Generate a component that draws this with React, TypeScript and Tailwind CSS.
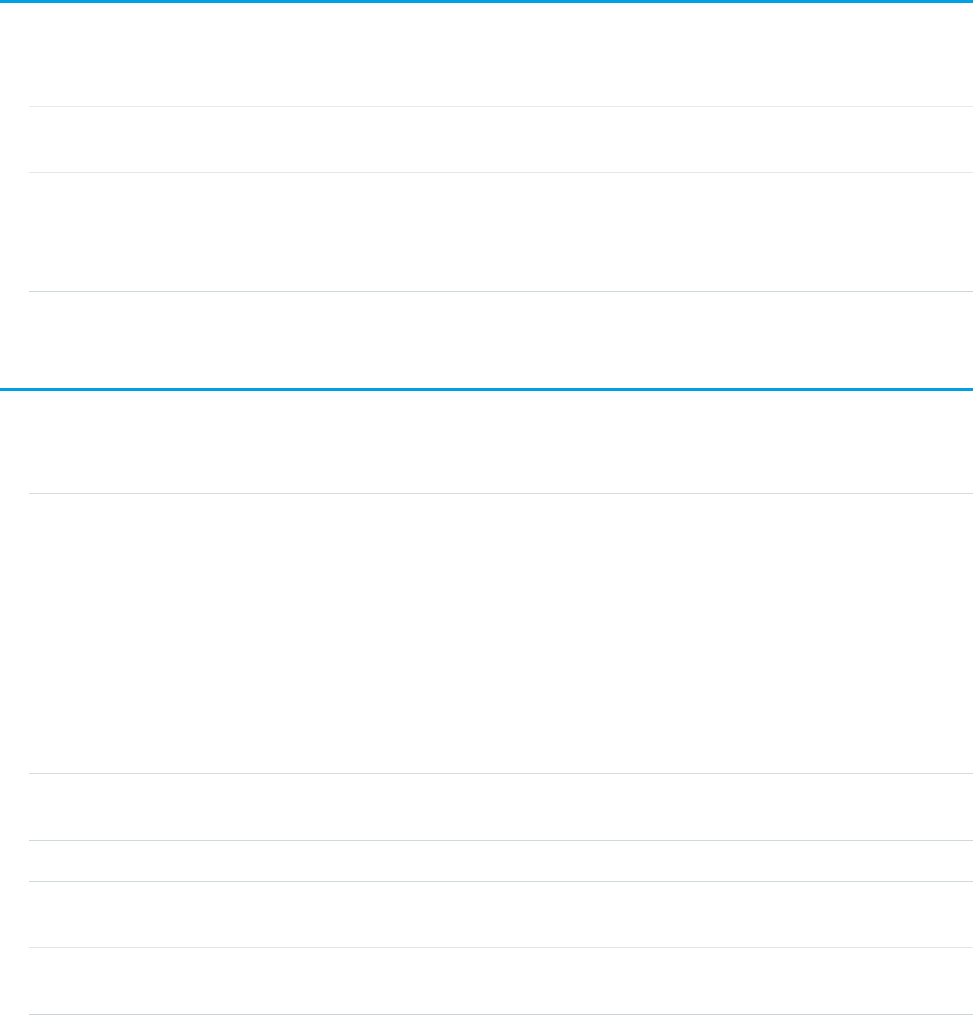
import { type FC } from "react";

type Row = { h: number; line: string };

const firstSection: Row[] = [
  { h: 103, line: "border-[#e6eaed]" },
  { h: 65, line: "border-[#e3e8eb]" },
  { h: 118, line: "border-[#cdd6db]" },
  { h: 95, line: "border-transparent" },
];

const secondSection: Row[] = [
  { h: 102, line: "border-[#d3dbe0]" },
  { h: 279, line: "border-[#d3dbe0]" },
  { h: 66, line: "border-[#cfd8dd]" },
  { h: 40, line: "border-[#cfd8dd]" },
  { h: 65, line: "border-[#e1e6ea]" },
  { h: 66, line: "border-[#c9d4db]" },
];

const Section: FC<{ rows: Row[] }> = ({ rows }) => (
  <section className="border-t-[3px] border-[#00a0e3]">
    {rows.map((row, i) => (
      <div key={i} className="flex flex-col" style={{ height: row.h + 1 }}>
        <div className="flex-1" />
        <div className={`ml-[29px] border-b ${row.line}`} />
      </div>
    ))}
  </section>
);

export default function App() {
  return (
    <div className="min-h-[1016px] w-full bg-white font-['Liberation_Sans',sans-serif]">
      <Section rows={firstSection} />
      <Section rows={secondSection} />
    </div>
  );
}
